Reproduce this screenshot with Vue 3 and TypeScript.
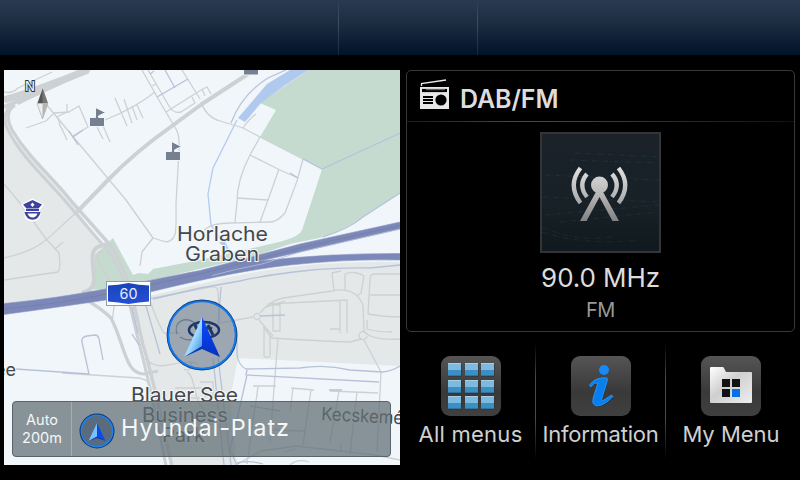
<script setup lang="ts">
interface MenuItem {
  id: 'all' | 'info' | 'my'
  label: string
}

interface Road {
  d: string
  w: number
}

const menu: MenuItem[] = [
  { id: 'all', label: 'All menus' },
  { id: 'info', label: 'Information' },
  { id: 'my', label: 'My Menu' },
]

const steps = [7, 24, 40]
const tiles: number[][] = steps.flatMap((y) => steps.map((x) => [x, y]))

const roads: Road[] = [
  { d: 'M4 92 Q12 94 18 88 L52 72', w: 1.3 },
  { d: 'M4 100 Q38 90 88 70', w: 7 },
  { d: 'M4 107 L40 92 L78 72', w: 4 },
  { d: 'M15 105 Q3 112 12 130 C30 160 52 176 72 202 L110 245 C128 270 133 300 143 345 C154 380 161 420 172 466', w: 3.4 },
  { d: 'M10 106 Q1 116 8 130 C22 158 46 178 66 202 L103 245 C122 265 127 293 137 335 C145 365 155 408 166 466', w: 3 },
  { d: 'M18 104 C55 86 75 78 90 70', w: 2 },
  { d: 'M248 74 L202 104 L172 126 Q135 152 108 180 L77 212', w: 4 },
  { d: 'M77 212 C62 225 50 238 39 245 C24 254 12 256 4 258', w: 1.3 },
  { d: 'M26 128 L46 121 L54 113 L69 112 L79 106 L88 127 L73 136', w: 1.3 },
  { d: 'M67 104 V112 L57 117 C62 125 57 122 62 129 L67 140', w: 1.3 },
  { d: 'M46 104 L70 133 L126 200 L153 238 L142 252 L140 266', w: 1.3 },
  { d: 'M105 120 Q135 108 155 92 M115 98 L127 126 M124 99 L132 123 M132 106 L137 120 M137 105 L143 118 M97 127 L103 139 M101 121 L110 142', w: 1.3 },
  { d: 'M142 70 L160 102 L176 129 Q180 136 179 150 L176 204 C176 230 178 240 166 242 L153 238', w: 1.3 },
  { d: 'M148 70 L169 106 Q173 114 181 112 L195 103 Q193 99 192 97 M166 112 L201 90 M152 86 L156 84 M182 70 L200 99', w: 1.3 },
  { d: 'M201 102 Q206 117 220 121 L243 128 L260 137 L303 159 M243 128 Q249 119 256 114', w: 1.3 },
  { d: 'M201 90 L207 87 L211 94 M202 89 L205 96', w: 1.3 },
  { d: 'M260 137 L250 155 Q237 180 237 202 L235 222 M250 155 L280 170 L298 178 M279 169 L268 200 L260 222 M303 159 L297 181 L285 213 Q277 222 270 222 L230 223 Q212 223 204 230 M237 198 L268 200', w: 1.3 },
  { d: 'M4 184 L20 203 L46 239 L59 253 Q61 268 58 272 L4 280 M55 249 L63 242', w: 1.3 },
  { d: 'M108 244 C87 247 93 255 94 280 Q94 290 82 293', w: 4 },
  { d: 'M103 251 Q94 252 99 262 L112 285', w: 2 },
  { d: 'M83 298 Q101 308 111 318 C125 345 125 374 144 374 L158 371', w: 3.2 },
  { d: 'M115 300 L112 322 M150 301 Q158 324 164 333 L180 333 M148 299 L210 287 Q219 286 218 293 L220 323 L253 317', w: 1.3 },
  { d: 'M260 316 A3 3 0 1 0 260 317 M260 313 Q271 300 283 298 L332 291 Q355 286 363 305 L364 332 Q374 341 400 339 M259 320 L273 336 M264 308 L285 301 M268 304 L347 300 V333 M330 329 H340 M273 305 H280 V331 H273 Z M340 301 V333 M334 291 L332 273 L341 271 M345 290 V274 Q354 270 364 276 L361 293 L357 296', w: 1.3 },
  { d: 'M400 274 H374 Q370 274 370 280 L368 314 Q385 317 400 317 M370 295 H400 M367 320 V329 Q375 332 392 332', w: 1.3 },
  { d: 'M263 327 L272 338 Q320 341 350 342 L361 339 M367 335 A4 4 0 1 0 367 336 M364 340 L381 372 L377 452 M278 339 L274 388 L270 442 M264 330 V356 Q267 359 270 356 V336', w: 1.3 },
  { d: 'M253 386 H276 M291 388 L314 390 M293 389 L290 411 M311 390 L303 445 M339 391 L330 443 M357 392 L350 454 M330 391 L378 393 M258 387 L247 464', w: 1.3 },
  { d: 'M234 466 L261 451 L296 446 L375 455 L400 460 M270 430 L305 431 M341 442 V452 M285 452 L295 449', w: 1.3 },
  { d: 'M145 358 C160 376 180 356 198 364 M187 372 C196 377 193 400 204 410 M184 369 A4 4 0 1 0 190 362 M175 388 H205 V398 H180', w: 1.3 },
  { d: 'M62 373 L139 378 Q150 380 151 388 M200 382 L213 382 V397 M290 465 Q297 458 309 462', w: 1.3 },
]

const lanes: string[] = [
  'M16 369 L89 374 L82 342 Q81 337 87 336 L95 335 Q98 335 99 339 L103 360',
  'M150 74 L154 71 M157 97 L188 79 M165 70 L175 88 M69 131 L78 145 M73 137 L83 130',
  'M303 159 L322 169 L400 133',
  'M231 123 Q242 94 268 78 L286 70',
  'M323 237 Q350 228 363 217 L400 193',
  'M132 307 L138 334 M146 306 L160 354 M132 334 L139 345',
  'M153 299 L200 288 L240 281 C280 272 330 267 370 268 L400 265',
  'M221 287 L218 325 M237 330 V355 Q239 366 246 369 L300 368 Q325 364 350 370 L382 372 Q392 371 400 366',
  'M247 370 L246 375 L379 382 M247 375 L230 450 L237 465 M218 357 L231 465 M213 358 L224 465 M260 316 L285 315',
  'M329 390 H342 M250 406 L280 411 M290 173 L298 178 M237 463 Q250 460 263 464',
]
</script>

<template>
  <div class="screen">
    <header class="status-bar">
      <div class="status left"></div>
      <div class="status mid"></div>
      <div class="status"></div>
    </header>

    <main class="content">
      <section class="map">
        <svg class="map-art" viewBox="4 70 396 395" width="396" height="395">
          <defs>
            <linearGradient id="lightWing" x1="0" y1="0" x2="1" y2="1">
              <stop offset="0" stop-color="#55aaf8" />
              <stop offset=".55" stop-color="#a0dafe" />
              <stop offset="1" stop-color="#297fe9" />
            </linearGradient>
            <linearGradient id="darkWing" x1="0" y1="0" x2="0" y2="1">
              <stop offset="0" stop-color="#0b4cff" />
              <stop offset="1" stop-color="#062fc4" />
            </linearGradient>
            <linearGradient id="shield" x1="0" y1="0" x2="0" y2="1">
              <stop offset="0" stop-color="#1a43b8" />
              <stop offset="1" stop-color="#2450d6" />
            </linearGradient>
          </defs>
          <rect x="4" y="70" width="396" height="395" fill="#f0f6f9" />
          <path class="urban" d="M4 122 L15 139 L69 200 L103 245 L93 287 L107 292 L4 306 Z" />
          <path class="urban" d="M132 300 L200 284 Q290 260 400 262 V366 L320 362 L238 358 L230 400 L237 466 H170 Z" />
          <path class="park" d="M308 70 H400 V193 L363 217 Q350 226 324 237 L290 244 L258 255 L107 291 L93 289 L95 255 L113 238 L133 275 L139 273 L148 274 L153 269 L200 260 L262 246 L283 241 Q300 236 302 230 L312 200 L322 169 L260 137 L276 110 L260 103 Z" />
          <path class="water" d="M290 70 H308 L284 86 L261 103 L245 122 L238 118 L267 84 Z" />
          <path class="stream" d="M237 120 L213 168 L208 194 L211 225 L223 243 L228 250" />
          <path class="pond" d="M219 243 L224 240 L229 249 Z" />

          <path v-for="(r, i) in roads" :key="'r' + i" class="road" :d="r.d" :stroke-width="r.w" />
          <path v-for="(d, i) in lanes" :key="'l' + i" class="lane" :d="d" />

          <g class="motorway">
            <path class="fill shape" d="M4 303.500 C80 296 135 283 200 270.500 L300 244 L400 222 V229 L300 252 L260 261 Q330 253 400 253.500 V260 Q345 259 290 265 Q235 271 150 292 L106 300 Q60 307 4 314.500 Z" />
            <path class="gap" d="M212 275.500 Q236 269 262 264 L300 252 L400 229" />
            <path class="divider" d="M4 309 C80 302 135 288 200 274 L300 248 L400 225.500" />
          </g>

          <g class="flag" stroke="#f0f6f9" stroke-width="1">
            <path d="M89.500 117.500 H95.500 V107.500 L105.500 112.500 L98.500 116 V117.500 H104.500 V126.500 H89.500 Z" />
            <path d="M165.500 151.500 H171.500 V141.500 L181.500 146.500 L174.500 150 V151.500 H180.500 V160.500 H165.500 Z" />
            <path d="M243.500 68 H258.500 V75 H243.500 Z" />
          </g>

          <g>
            <path d="M22.500 205 L32.500 199.500 L42.500 205 L39 209.500 V212 Q41 220 32.500 220.500 Q24 220 26 212 V209.500 Z" fill="#fff" stroke="#fff" stroke-width="2" />
            <path d="M23 204.500 L32.500 200 L42 204.500 L38.500 208.500 H26.500 Z M26 209 H39 V211 H26 Z M24.500 212 H40.500 Q39 219.500 32.500 219.800 Q26 219.500 24.500 212 Z" fill="#3d42a0" />
            <path d="M27.500 213.500 H37.500 Q36 217.500 32.500 217.500 Q29 217.500 27.500 213.500 Z" fill="#fff" />
            <path d="M32.500 202.500 L34.500 204.800 L32.500 207 L30.500 204.800 Z" fill="#fff" />
          </g>

          <text class="north" x="25" y="90.500" textLength="10" lengthAdjust="spacingAndGlyphs">N</text>
          <path d="M42.500 87.500 L37 103.500 H48 Z" fill="#555" stroke="#fff" stroke-width=".6" />
          <path d="M42.500 87.500 V103.500 H48 Z" fill="#777" />
          <path d="M37 103.500 H48 L42.500 119 Z" fill="#eee" stroke="#aaa" stroke-width=".7" />
          <path d="M42.500 103.500 H48 L42.500 119 Z" fill="#b5b5b5" />

          <g>
            <rect x="106.500" y="281.500" width="44" height="24" fill="#fff" stroke="#8f9cae" />
            <path d="M108 285.500 Q118 285 128.500 283 Q139 285 149 285.500 V301.500 Q139 302 128.500 304 Q118 302 108 301.500 Z" fill="url(#shield)" />
            <text x="119.500" y="299" textLength="18" lengthAdjust="spacingAndGlyphs" class="route">60</text>
          </g>

          <g class="place">
            <text x="177" y="240.500" textLength="91" lengthAdjust="spacingAndGlyphs">Horlache</text>
            <text x="185" y="260.500" textLength="74" lengthAdjust="spacingAndGlyphs">Graben</text>
            <text x="131" y="401.500" textLength="107" lengthAdjust="spacingAndGlyphs">Blauer See</text>
            <text x="142" y="421.500" textLength="86" lengthAdjust="spacingAndGlyphs">Business</text>
            <text x="162" y="441.500" textLength="43" lengthAdjust="spacingAndGlyphs">Park</text>
            <text x="-5" y="375.500" class="small" textLength="21" lengthAdjust="spacingAndGlyphs">ee</text>
            <text x="321" y="420" class="small" textLength="82" lengthAdjust="spacingAndGlyphs" transform="rotate(3 321 420)">Kecskemé</text>
          </g>

          <circle cx="202" cy="335" r="34.300" fill="#687585" fill-opacity=".57" stroke="#123e7c" stroke-width="2.200" />
          <circle cx="202" cy="335" r="33.700" fill="none" stroke="#0d7cf2" stroke-width="1.800" />
          <path d="M177 334 C173 322 185 315 196 324 M180 337 Q190 343 198 337" class="mark" />
          <ellipse cx="204" cy="330" rx="15" ry="8" fill="none" stroke="#1d3768" stroke-width="2.500" />
          <path d="M195 325 L200 335 M208 325 L213 335 M197 332 Q205 326 212 329" fill="none" stroke="#1d3768" stroke-width="3" />
          <path d="M202 317 L184 357 L202 347 Z" fill="url(#lightWing)" />
          <path d="M202 317 L220 357 L202 347 Z" fill="url(#darkWing)" />
          <path d="M184 357 L202 346 L220 357 L202 349 Z" fill="#0739b6" />
        </svg>

        <footer class="location">
          <div class="scale"><span>Auto</span><span>200m</span></div>
          <div class="street">
            <svg width="36" height="36" viewBox="0 0 36 36">
              <circle cx="18" cy="18" r="16.500" fill="#596b7d" stroke="#153763" stroke-width="2" />
              <circle cx="18" cy="18" r="15.700" fill="none" stroke="#1b82ee" stroke-width="1.500" />
              <path d="M18 10 L9.500 28 L18 24 Z" fill="#76c2ff" />
              <path d="M18 10 L26.500 28 L18 24 Z" fill="#084bed" />
              <path d="M9.500 28 L18 23.500 L26.500 28 L18 25 Z" fill="#0a36ba" />
            </svg>
            <span class="street-name">Hyundai-Platz</span>
          </div>
        </footer>
      </section>

      <section class="side">
        <article class="radio">
          <div class="radio-head">
            <svg width="32" height="32" viewBox="0 0 32 32">
              <path d="M3.500 7 V4.500 L28 1" fill="none" stroke="#e9e9e9" stroke-width="1.300" />
              <rect x="2" y="8" width="29" height="22" fill="#e8e8e8" />
              <path d="M5 18 H15 M5 21 H15 M5 24 H15" stroke="#000" stroke-width="1.800" />
              <path d="M4 11.500 H29" stroke="#000" stroke-width="3.200" />
              <path d="M8 10.700 H27" stroke="#aaa" stroke-width=".7" />
              <circle cx="23" cy="21" r="5.600" fill="#000" />
            </svg>
            <h1>DAB/FM</h1>
          </div>
          <div class="radio-body">
            <div class="cover">
              <svg width="117" height="117" viewBox="542 134 117 117">
                <defs>
                  <linearGradient id="steel" gradientUnits="userSpaceOnUse" x1="0" y1="166" x2="0" y2="222">
                    <stop offset="0" stop-color="#e2e2e2" />
                    <stop offset=".5" stop-color="#b8b8b8" />
                    <stop offset="1" stop-color="#808080" />
                  </linearGradient>
                </defs>
                <g stroke="#70868f" stroke-width="1" fill="none" opacity=".13">
                  <path d="M575 153 L659 157 M570 160 L659 163 M545 175 L659 180 M542 197 L659 202 M545 215 L659 205 M560 222 L659 212 M542 227 Q575 242 612 237 M542 232 Q585 246 640 240" stroke-dasharray="5 2 1 3" />
                </g>
                <g fill="none" stroke="url(#steel)" stroke-width="4.300">
                  <path d="M580.500 168 Q567 185 580.500 203" />
                  <path d="M587 174 Q577.500 185 587 197" />
                  <path d="M618.500 168 Q632 185 618.500 203" />
                  <path d="M612 174 Q621.500 185 612 197" />
                </g>
                <path d="M597 190 L580 221 H586.500 L599.500 197 L612.500 221 H619 L602 190 Z" fill="url(#steel)" />
                <circle cx="599.500" cy="185" r="8.500" fill="url(#steel)" />
              </svg>
            </div>
            <p class="frequency">90.0 MHz</p>
            <p class="band">FM</p>
          </div>
        </article>

        <nav class="menu">
          <button v-for="item in menu" :key="item.id" :class="['menu-item', item.id]" type="button">
            <span class="tile">
              <svg v-if="item.id === 'all'" width="60" height="60" viewBox="0 0 60 60">
                <g v-for="([x, y], i) in tiles" :key="i">
                  <rect :x="x" :y="y + 1" width="13.500" height="12.500" fill="#2b3338" />
                  <rect :x="x" :y="y" width="13" height="12.700" fill="#3b8fc5" />
                  <rect :x="x" :y="y" width="13" height="7" fill="#7eb9df" />
                  <rect :x="x" :y="y" width="13" height="1" fill="#a6cee7" />
                </g>
              </svg>
              <svg v-else-if="item.id === 'info'" width="60" height="60" viewBox="0 0 60 60">
                <path d="M18.500 29 Q25 20.500 36 22 Q37 23 36 26 L31 42 Q30 46 33 44 L40.500 39 L42 40.500 C37 46 31 50 26 50 Q20 49 22.500 41 L27 27 Q24 26 20 31 Z" transform="translate(.5 1)" fill="#20252b" />
                <circle cx="33" cy="14" r="5" fill="#168af8" />
                <path d="M18.500 29 Q25 20.500 36 22 Q37 23 36 26 L31 42 Q30 46 33 44 L40.500 39 L42 40.500 C37 46 31 50 26 50 Q20 49 22.500 41 L27 27 Q24 26 20 31 Z" fill="#087fee" stroke="#2998ff" stroke-width=".9" />
              </svg>
              <svg v-else width="60" height="60" viewBox="0 0 60 60">
                <defs>
                  <linearGradient id="folder" x1="0" y1="0" x2="1" y2="1">
                    <stop offset="0" stop-color="#fff" />
                    <stop offset=".45" stop-color="#cfcfcf" />
                    <stop offset="1" stop-color="#eee" />
                  </linearGradient>
                </defs>
                <path d="M9 12 Q9 11 10 11 H21.500 Q23 11 23.500 13 L25 16 H50 Q51 16 51 17 V46 Q51 47 50 47 H10 Q9 47 9 46 Z" fill="url(#folder)" />
                <path d="M21 23 H29 V31 H21 Z M31 23 H39 V31 H31 Z M21 33 H29 V41 H21 Z" fill="#121212" />
                <path d="M31 33 H39 V41 H31 Z" fill="#0870e7" />
              </svg>
            </span>
            <span class="menu-label">{{ item.label }}</span>
          </button>
        </nav>
      </section>
    </main>
  </div>
</template>

<style>
body {
  background: #000;
}
</style>

<style scoped>
.screen {
  width: 800px;
  height: 480px;
  overflow: hidden;
  background: #000;
  font-family: Inter, "Liberation Sans", sans-serif;
  color: #ddd;
}
.status-bar {
  height: 55px;
  display: grid;
  grid-template-columns: 339px 139px 1fr;
  background: linear-gradient(#293b52, #1d2e43 40%, #001329);
}
.status.left,
.status.mid {
  border-right: 1px solid;
  border-image: linear-gradient(#2c3c50, #3d4f65 40%, #14253a) 1;
}
.content {
  display: flex;
  gap: 6px;
  padding: 15px 5px 0 4px;
}
.map {
  position: relative;
  width: 396px;
  height: 395px;
  overflow: hidden;
}
.map-art {
  display: block;
}
.urban {
  fill: #e4e8e9;
}
.park {
  fill: #c6dbd0;
}
.water {
  fill: #b0c9ee;
}
.stream {
  fill: none;
  stroke: #b5cbf1;
  stroke-width: 1.3;
}
.pond {
  fill: #b0c9ee;
}
.road {
  fill: none;
  stroke: #cdd1d4;
  stroke-linejoin: round;
}
.lane {
  fill: none;
  stroke: #b7c2d9;
  stroke-width: 1.3;
}
.mark {
  fill: none;
  stroke: #6d7c92;
  stroke-width: 1.3;
}
.motorway path {
  fill: none;
}
.motorway .shape {
  fill: #7b88b9;
  stroke: #8d98c2;
  stroke-width: 0.6;
}
.motorway .gap {
  stroke: #b5bfd6;
  stroke-width: 0.8;
}
.motorway .divider {
  stroke: #7780a6;
  stroke-width: 1;
}
.flag {
  fill: #758091;
}
.north {
  font-size: 13px;
  fill: #fff;
  stroke: #333;
  stroke-width: 2px;
  paint-order: stroke;
}
.route {
  font-size: 14px;
  fill: #e8edff;
}
.place {
  font-size: 20px;
  fill: #44474b;
  stroke: #f4f7f8;
  stroke-width: 2px;
  paint-order: stroke;
}
.place .small {
  font-size: 18px;
}
.location {
  position: absolute;
  left: 8px;
  top: 331px;
  width: 379px;
  height: 56px;
  box-sizing: border-box;
  border: 1px solid #59656b;
  border-radius: 4px;
  display: flex;
  background: rgba(98, 112, 119, 0.74);
  color: #f5f7f8;
}
.scale {
  width: 58px;
  border-right: 1px solid #a4adb2;
  display: flex;
  flex-direction: column;
  align-items: center;
  justify-content: center;
  font-size: 14.5px;
  line-height: 18px;
}
.street {
  display: flex;
  align-items: center;
  gap: 6px;
  padding: 3px 0 0 7px;
}
.street-name {
  font-size: 23.5px;
  font-weight: 400;
  letter-spacing: 0.9px;
  padding-bottom: 6px;
}
.side {
  width: 389px;
}
.radio {
  box-sizing: border-box;
  height: 262px;
  border: 1px solid #383838;
  border-radius: 5px;
}
.radio-head {
  height: 50px;
  display: flex;
  align-items: flex-start;
  gap: 10px;
  padding-left: 11px;
  border-bottom: 1px solid;
  border-image: linear-gradient(90deg, #1b1b1b, #4a4a4a 30%, #333 60%, #111) 1;
}
.radio-head svg {
  margin-top: 8px;
}
h1 {
  margin: 14px 0 0;
  font-size: 25px;
  line-height: 29px;
  font-weight: 600;
  letter-spacing: -0.1px;
}
.radio-body {
  display: flex;
  flex-direction: column;
  align-items: center;
  padding-top: 10px;
}
.cover {
  width: 117px;
  height: 117px;
  border: 2px solid #353535;
  background: linear-gradient(#1b2229, #172127 60%, #10191e);
}
.cover svg {
  display: block;
}
p {
  margin: 0;
}
.frequency {
  margin-top: 9px;
  font-size: 26px;
  line-height: 31px;
  font-weight: 400;
  letter-spacing: -0.1px;
}
.band {
  margin-top: 7px;
  font-size: 20px;
  line-height: 20px;
  font-weight: 400;
  letter-spacing: -0.5px;
  color: #999;
}
.menu {
  display: grid;
  grid-template-columns: repeat(3, 130px);
  margin-top: 12px;
}
.menu-item {
  height: 115px;
  display: flex;
  flex-direction: column;
  align-items: center;
  border: 0;
  padding: 12px 0 0;
  background: none;
  color: #d0d0d0;
  font: inherit;
}
.menu-item.all,
.menu-item.info {
  border-right: 1px solid;
  border-image: linear-gradient(#000, #4a4a4a 30%, #4a4a4a 65%, #000) 1;
}
.tile {
  width: 60px;
  height: 60px;
  border-radius: 9px;
  background: linear-gradient(#555, #393939 60%, #404040);
}
.tile svg {
  display: block;
}
.menu-label {
  margin-top: 5px;
  font-size: 22px;
  line-height: 27px;
  font-weight: 400;
  white-space: nowrap;
}
.all .menu-label {
  letter-spacing: 0.25px;
}
.info .menu-label {
  letter-spacing: -0.25px;
}
.my .menu-label {
  letter-spacing: 0;
}
</style>
